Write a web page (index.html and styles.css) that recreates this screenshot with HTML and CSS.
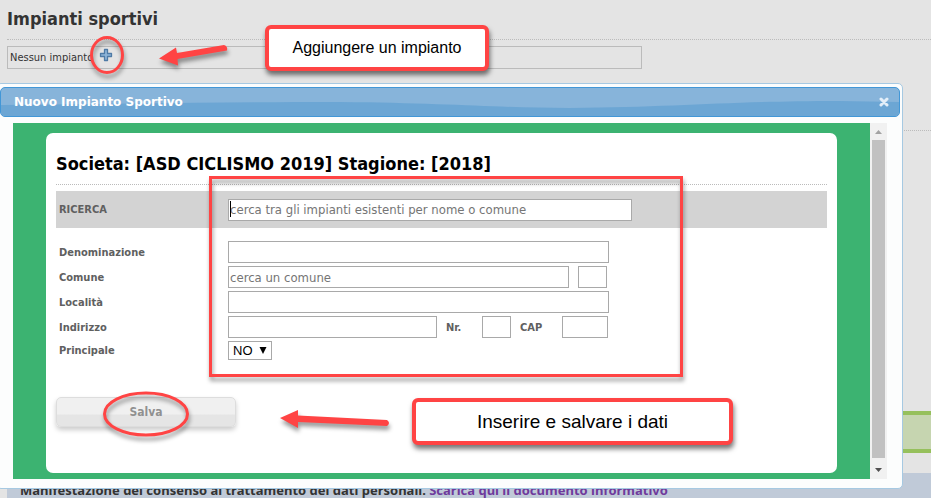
FILE: index.html
```html
<!DOCTYPE html>
<html lang="it">
<head>
<meta charset="utf-8">
<title>Impianti sportivi</title>
<link rel="stylesheet" href="styles.css">
</head>
<body>
<main class="page">
  <section class="facilities">
    <h1>Impianti sportivi</h1>
    <div class="facility-list">
      <span>Nessun impianto</span>
      <button type="button" class="add" aria-label="Aggiungi">
        <svg width="14" height="14" viewBox="0 0 14 14"><path d="M5.500 1.500h3v4h4v3h-4v4h-3v-4h-4v-3h4z" fill="#8db4d8" stroke="#4f7ba6" stroke-width="1.300" stroke-linejoin="round"/></svg>
      </button>
    </div>
  </section>
  <div class="rule"></div>
  <div class="notice"></div>
  <footer class="consent">Manifestazione del consenso al trattamento dei dati personali. <a href="#">Scarica qui il documento informativo</a></footer>
</main>

<div class="dialog" role="dialog" aria-labelledby="dialog-title">
  <header class="titlebar">
    <svg class="wave" viewBox="0 0 900 28" preserveAspectRatio="none"><path d="M0 17C120 16 220 14 340 14C450 15 500 20 570 20C680 19 730 13 840 13L900 14V28H0z" fill="#6ca6d4"/></svg>
    <h2 id="dialog-title">Nuovo Impianto Sportivo</h2>
    <button type="button" class="close" aria-label="Chiudi">
      <svg width="10" height="10" viewBox="0 0 10 10"><path d="M2 2l6 6M8 2l-6 6" stroke="#e3eef8" stroke-width="3" stroke-linecap="round"/></svg>
    </button>
  </header>
  <div class="viewport">
    <div class="frame">
      <form class="sheet">
        <h3>Societa: [ASD CICLISMO 2019] Stagione: [2018]</h3>
        <div class="row search">
          <label for="q">RICERCA</label>
          <input id="q" class="w-search" type="text" placeholder="cerca tra gli impianti esistenti per nome o comune">
          <span class="caret"></span>
        </div>
        <div class="rows">
          <div class="row"><label for="name">Denominazione</label><input id="name" class="w-full" type="text"></div>
          <div class="row"><label for="town">Comune</label><input id="town" class="w-town" type="text" placeholder="cerca un comune"><input class="w-small" type="text" aria-label="Provincia"></div>
          <div class="row"><label for="place">Località</label><input id="place" class="w-full" type="text"></div>
          <div class="row"><label for="street">Indirizzo</label><input id="street" class="w-street" type="text"><label class="short" for="nr">Nr.</label><input id="nr" class="w-small" type="text"><label class="short cap" for="cap">CAP</label><input id="cap" class="w-cap" type="text"></div>
          <div class="row"><label for="main">Principale</label><span class="select"><select id="main"><option>NO</option><option>SI</option></select><svg width="8" height="8" viewBox="0 0 8 8"><path d="M0.500 1h7L4 8z"/></svg></span></div>
        </div>
        <button type="submit" class="save">Salva</button>
      </form>
    </div>
    <div class="scrollbar">
      <svg width="17" height="17" viewBox="0 0 17 17"><path d="M5 11l3.500-4 3.500 4z" fill="#a3a3a3"/></svg>
      <div class="thumb"></div>
      <svg width="17" height="21" viewBox="0 0 17 21"><path d="M5 10h7l-3.500 4z" fill="#505050"/></svg>
    </div>
  </div>
</div>

<div class="highlight"></div>
<div class="callout callout-add">Aggiungere un impianto</div>
<div class="callout callout-save">Inserire e salvare i dati</div>
<svg class="mark mark-add" width="140" height="50" viewBox="0 0 140 50">
  <ellipse cx="17" cy="19" rx="15.500" ry="17.500" fill="none" stroke="#f44" stroke-width="3"/>
  <path d="M69 22.500L86 11.500L87 17L134 9Q138 10 137 14.500L87.500 23L88 29.500z" fill="#f44"/>
</svg>
<svg class="mark mark-save" width="290" height="50" viewBox="0 0 290 50">
  <ellipse cx="43" cy="24" rx="41.500" ry="21" fill="none" stroke="#f44" stroke-width="3"/>
  <path d="M177 28L195 20L195 25.500L284 30Q288 33 284 36L195 32L195 38z" fill="#f44"/>
</svg>
</body>
</html>
```

FILE: styles.css
```css
* { box-sizing: border-box; }

body {
  margin: 0;
  min-height: 100vh;
  overflow: hidden;
  position: relative;
  background: #e4e4e4;
  color: #333;
  font-family: "DejaVu Sans Condensed", "DejaVu Sans", sans-serif;
  font-stretch: condensed;
  font-size: 11px;
}

h1, h2, h3 { margin: 0; }
button { padding: 0; border: 0; background: none; font-family: inherit; }
svg { display: block; }

.page {
  display: flex;
  flex-direction: column;
  height: 100vh;
  padding-left: 7px;
}
.page > * { flex-shrink: 0; }

.facilities h1 {
  height: 40px;
  border-bottom: 1px dotted #bbb;
  font-size: 18px;
  line-height: 38px;
}

.facility-list {
  display: flex;
  align-items: center;
  width: 635px;
  height: 23px;
  margin-top: 6px;
  padding-left: 2px;
  border: 1px solid #bbb;
  line-height: 24px;
}
.facility-list span { width: 82px; white-space: nowrap; }

.add { margin: -6px 0 0 7px; }

.rule { height: 1px; margin-top: 61px; border-top: 1px dotted #bbb; }

.notice {
  height: 42px;
  margin-top: 280px;
  border: solid #96c05c;
  border-width: 4px 0;
  background: #c6d5b0;
}

.consent {
  flex: 1;
  margin-top: 20px;
  padding-left: 13px;
  background: #c0cad8;
  font-family: "Noto Sans", sans-serif;
  font-stretch: normal;
  font-size: 13px;
  font-weight: bold;
  line-height: 34px;
  white-space: nowrap;
}
.consent a { color: #6f3a9c; text-decoration: none; }

.dialog {
  position: absolute;
  top: 83px;
  left: -4px;
  right: 28px;
  padding: 3px 2px 3px 3px;
  border: 1px solid #a6c9e2;
  border-radius: 5px;
  background: #fcfdfd;
}

.titlebar {
  position: relative;
  display: flex;
  align-items: center;
  justify-content: space-between;
  height: 30px;
  padding: 0 10px 0 13px;
  border: 1px solid #4297d7;
  border-radius: 5px;
  background: #87b4da;
  color: #fff;
  overflow: hidden;
}
.titlebar h2 { position: relative; font-size: 12px; line-height: 28px; font-family: "DejaVu Sans", sans-serif; font-stretch: normal; }
.close { position: relative; }
.wave { position: absolute; inset: 0; width: 100%; height: 100%; }

.viewport { display: flex; margin: 6px 13px 6px 13px; }

.frame { flex: 1; padding: 10px 33px 6px; background: #3cb371; }

.sheet {
  height: 340px;
  padding: 10px;
  border-radius: 7px;
  background: #fff;
}

.sheet h3 {
  height: 42px;
  border-bottom: 1px dotted #bbb;
  color: #000;
  font-size: 18px;
  line-height: 42px;
  white-space: nowrap;
}

.row { display: flex; align-items: center; }
.row label {
  width: 172px;
  padding-left: 3px;
  color: #606060;
  font-weight: bold;
}
.row .short { width: 45px; padding-left: 9px; }
.row .cap { width: 51px; }

.row input {
  height: 22px;
  padding: 0 1px;
  border: 1px solid #a9a9a9;
  background: #fff;
  font-family: inherit;
  font-size: 13px;
}
.row input::placeholder { color: #757575; }

.search { position: relative; height: 37px; margin-top: 6px; background: #d3d3d3; }
.caret { position: absolute; left: 174px; top: 10px; width: 1px; height: 16px; background: #000; }

.rows { display: grid; gap: 3px; margin-top: 13px; }

.w-search { width: 404px; }
.w-full { width: 381px; }
.w-town { width: 341px; margin-right: 9px; }
.w-street { width: 209px; }
.w-small { width: 29px; }
.w-cap { width: 46px; }

.select { position: relative; }
.select select {
  display: block;
  appearance: none;
  width: 44px;
  height: 19px;
  padding: 0 4px;
  border: 1px solid #a9a9a9;
  border-radius: 0;
  background: #fff;
  color: #000;
  font: 13px/17px "Liberation Sans", sans-serif;
}
.select svg { position: absolute; right: 5px; top: 5px; }

.save {
  display: block;
  width: 180px;
  height: 30px;
  margin-top: 37px;
  border: 1px solid #ddd;
  border-radius: 5px;
  background: linear-gradient(#f0f0f0 0 58%, #e5e5e5 60%);
  box-shadow: 0 3px 5px #ccc;
  color: #909090;
  font-size: 12px;
  font-weight: bold;
}

.scrollbar { display: flex; flex-direction: column; width: 17px; background: #f1f1f1; }
.thumb { flex: 1; margin: 0 2px; background: #c1c1c1; }

.highlight {
  position: absolute;
  left: 209px;
  top: 176px;
  width: 474px;
  height: 201px;
  border: 3px solid #f44;
  filter: drop-shadow(1px 4px 2px #0006);
}

.callout {
  position: absolute;
  border: 4px solid #f44;
  border-radius: 6px;
  background: #fff;
  box-shadow: 1px 4px 5px #0008;
  color: #000;
  font-family: "Liberation Sans", sans-serif;
  font-stretch: normal;
  text-align: center;
  white-space: nowrap;
}
.callout-add { left: 265px; top: 25px; width: 224px; height: 46px; font-size: 16px; line-height: 38px; }
.callout-save { left: 412px; top: 398px; width: 321px; height: 47px; font-size: 19px; line-height: 39px; }

.mark { position: absolute; overflow: visible; filter: drop-shadow(1px 4px 2px #0006); }
.mark-add { left: 90px; top: 36px; }
.mark-save { left: 103px; top: 390px; }
```
